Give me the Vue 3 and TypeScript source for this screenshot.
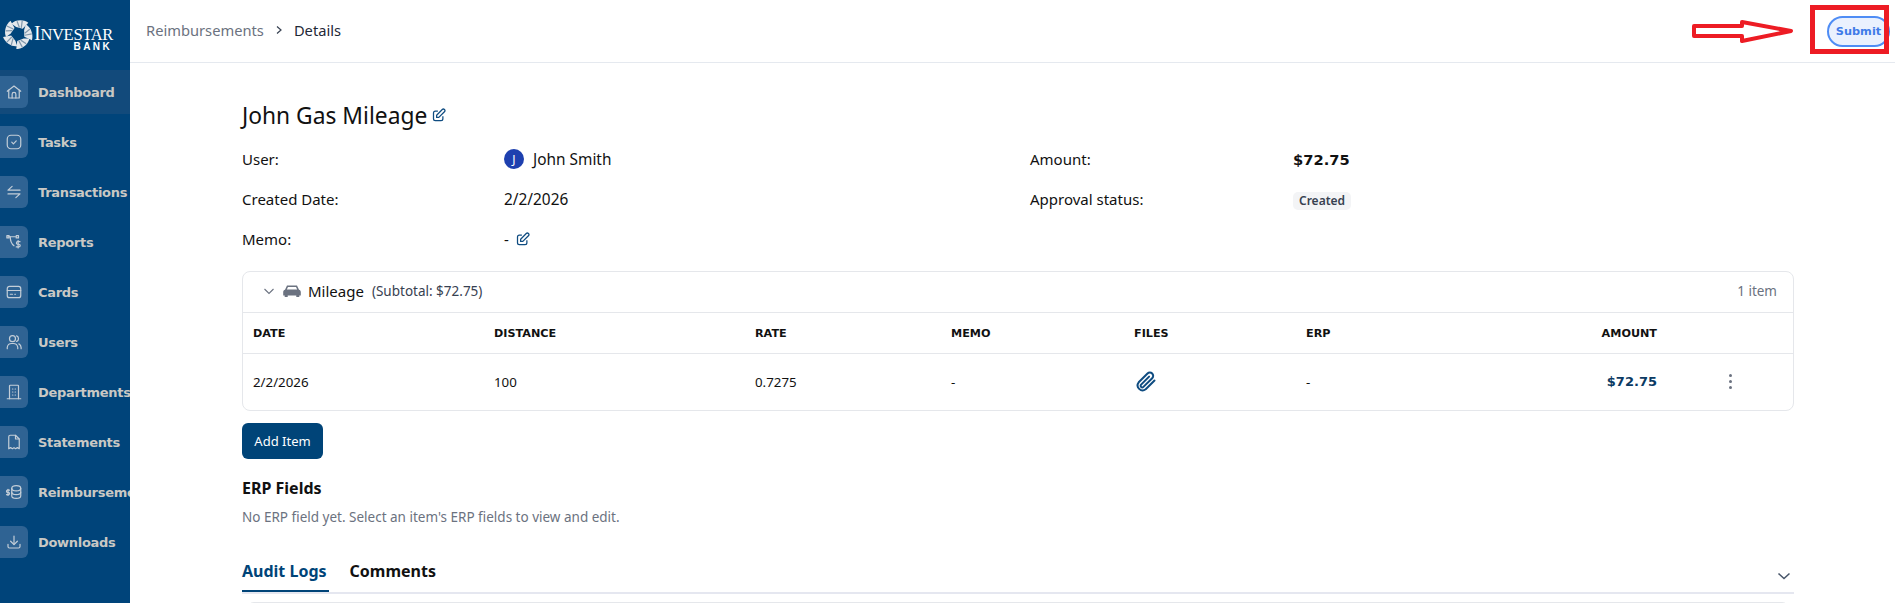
<script setup lang="ts">
interface NavItem {
  label: string;
  active?: boolean;
  paths: string[];
}

const navItems: NavItem[] = [
  { label: 'Dashboard', active: true, paths: ['M3 11l9-7 9 7', 'M5 9.5V20h14V9.5', 'M9.5 20v-5a2.5 2.5 0 0 1 5 0v5'] },
  { label: 'Tasks', paths: ['M8 3h8a5 5 0 0 1 5 5v8a5 5 0 0 1-5 5H8a5 5 0 0 1-5-5V8a5 5 0 0 1 5-5z', 'M9 12.2l2.2 2.2L15 10.5'] },
  { label: 'Transactions', paths: ['M20 9.5H4L9.5 4.500', 'M4 14.5h16L14.500 19.500'] },
  { label: 'Reports', paths: ['M4 5h10', 'M7 5c0 6 1 9 5 12', 'M2.500 3.500h3v3h-3z', 'M15 3.500h3v3h-3z', 'M20 11.500h-3a1.500 1.500 0 0 0 0 3.500h1.500a1.500 1.500 0 0 1 0 3.500H15', 'M17.500 10v10'] },
  { label: 'Cards', paths: ['M6 4.500h12a3 3 0 0 1 3 3v9a3 3 0 0 1-3 3H6a3 3 0 0 1-3-3v-9a3 3 0 0 1 3-3z', 'M3 10h18', 'M7 15h3', 'M13 15h1'] },
  { label: 'Users', paths: ['M10 3.500a4 4 0 1 1 0 8 4 4 0 0 1 0-8z', 'M3 21v-2a6 6 0 0 1 6-5h2a6 6 0 0 1 6 5v2', 'M15.500 3.800a4 4 0 0 1 0 7.400', 'M18.500 14.500a6 6 0 0 1 3 5V21'] },
  { label: 'Departments', paths: ['M6 21V4a1 1 0 0 1 1-1h10a1 1 0 0 1 1 1v17', 'M3 21h18', 'M10 8h.5', 'M13.500 8h.5', 'M10 12h.5', 'M13.500 12h.5', 'M10 16h.5', 'M13.500 16h.5'] },
  { label: 'Statements', paths: ['M5 21V5a2 2 0 0 1 2-2h7l5 5v13l-2.500-1.500L14 21l-2-1.500L10 21l-2.500-1.500z', 'M14 3v5h5'] },
  { label: 'Reimbursements', paths: ['M9 7c0-2 2.500-3.500 6-3.500S21 5 21 7v10c0 2-2.500 3.500-6 3.500S9 19 9 17z', 'M9 7c0 2 2.500 3.500 6 3.500S21 9 21 7', 'M9 12c0 2 2.500 3.500 6 3.500s6-1.500 6-3.500', 'M6 9.500H3.500a1 1 0 0 0 0 3h1a1 1 0 0 1 0 3H2', 'M4 8.500v8'] },
  { label: 'Downloads', paths: ['M12 4v11', 'M7.500 11l4.500 4.500 4.500-4.500', 'M4 15v3a2 2 0 0 0 2 2h12a2 2 0 0 0 2-2v-3'] },
];

const columns = ['DATE', 'DISTANCE', 'RATE', 'MEMO', 'FILES', 'ERP'];
const editPaths = ['M11 5H7a3 3 0 0 0-3 3v9a3 3 0 0 0 3 3h9a3 3 0 0 0 3-3v-4', 'M9 15v-3.500L18 2.500a1.800 1.800 0 0 1 3.500 3.500L12.500 15z'];
const starArcs = [0, 72, 144, 216, 288];
</script>

<template>
  <div class="page">
    <aside class="sidebar">
      <div class="logo">
        <svg class="logo__star" viewBox="0 0 32 32" width="30" height="30" aria-hidden="true">
          <g v-for="angle in starArcs" :key="angle" :transform="`rotate(${angle} 16 16)`">
            <path d="M9 5 C13 1 21 0 27 4 L21 10.500 L14 8.500 Z" fill="#e4e8ec" />
            <path d="M15 2.500 L17.500 9 M20.500 2 L19.500 9.500" stroke="#8298ac" stroke-width="1.300" />
          </g>
        </svg>
        <div class="logo__words">
          <span class="logo__name"><span class="logo__cap">I</span>NVESTAR</span>
          <span class="logo__bank">BANK</span>
        </div>
      </div>

      <nav class="nav">
        <a v-for="item in navItems" :key="item.label" class="nav__item" :class="{ 'nav__item--active': item.active }">
          <span class="nav__icon">
            <svg viewBox="0 0 24 24" width="18" height="18" fill="none" stroke="currentColor" stroke-width="1.600" stroke-linecap="round" stroke-linejoin="round" aria-hidden="true">
              <path v-for="d in item.paths" :key="d" :d="d" />
            </svg>
          </span>
          <span class="nav__label">{{ item.label }}</span>
        </a>
      </nav>
    </aside>

    <div class="main">
      <header class="topbar">
        <div class="crumbs">
          <span class="crumbs__link">Reimbursements</span>
          <svg viewBox="0 0 10 10" width="10" height="10" fill="none" stroke="#374151" stroke-width="1.200" aria-hidden="true"><path d="M3 1.500L7 5 3 8.500" /></svg>
          <span class="crumbs__current">Details</span>
        </div>
        <button type="button" class="submit">Submit</button>
      </header>

      <section class="content">
        <h1 class="title">
          John Gas Mileage
          <svg class="edit" viewBox="0 0 24 24" width="15" height="15" fill="none" stroke="currentColor" stroke-width="2" stroke-linejoin="round" aria-hidden="true">
            <path v-for="d in editPaths" :key="d" :d="d" />
          </svg>
        </h1>

        <div class="facts">
          <span>User:</span>
          <span class="user"><span class="user__avatar">J</span>John Smith</span>
          <span>Amount:</span>
          <strong class="facts__amount">$72.75</strong>

          <span>Created Date:</span>
          <span class="facts__value">2/2/2026</span>
          <span>Approval status:</span>
          <span><span class="badge">Created</span></span>

          <span>Memo:</span>
          <span class="memo">
            -
            <svg class="edit" viewBox="0 0 24 24" width="15" height="15" fill="none" stroke="currentColor" stroke-width="2" stroke-linejoin="round" aria-hidden="true">
              <path v-for="d in editPaths" :key="d" :d="d" />
            </svg>
          </span>
        </div>

        <div class="card">
          <div class="card__head">
            <div class="card__title">
              <svg viewBox="0 0 12 12" width="12" height="12" fill="none" stroke="#6b7280" stroke-width="1.100" aria-hidden="true"><path d="M1.500 4L6 8.500 10.500 4" /></svg>
              <svg class="car" viewBox="0 0 18 14" width="18" height="14" aria-hidden="true">
                <path fill="#6b7280" d="M4 1.500h10l2 4.200c1 .4 1.800 1 1.800 2.300v3.500h-1.500v1.500h-3v-1.500H4.700v1.500h-3v-1.500H.2V8c0-1.300.800-1.900 1.800-2.300zM5 3L3.800 5.500h10.400L13 3z" />
              </svg>
              <span class="card__name">Mileage</span>
              <span class="card__subtotal">(Subtotal: $72.75)</span>
            </div>
            <span class="card__count">1 item</span>
          </div>

          <div class="row row--head">
            <span v-for="col in columns" :key="col">{{ col }}</span>
            <span class="row__amount">AMOUNT</span>
            <span></span>
          </div>

          <div class="row row--body">
            <span>2/2/2026</span>
            <span>100</span>
            <span>0.7275</span>
            <span>-</span>
            <span class="clip">
              <svg viewBox="0 0 24 24" width="24" height="24" fill="none" stroke="#0f4c81" stroke-width="2" stroke-linecap="round" stroke-linejoin="round" aria-hidden="true">
                <path d="M20.500 10.500l-8.800 8.800a5 5 0 0 1-7-7l8.800-8.800a3.300 3.300 0 0 1 4.700 4.700l-8.800 8.700a1.600 1.600 0 0 1-2.300-2.300l8-8" />
              </svg>
            </span>
            <span>-</span>
            <span class="row__amount row__amount--value">$72.75</span>
            <span class="dots"><i></i><i></i><i></i></span>
          </div>
        </div>

        <button type="button" class="add">Add Item</button>

        <h2 class="erp__title">ERP Fields</h2>
        <p class="erp__text">No ERP field yet. Select an item's ERP fields to view and edit.</p>

        <div class="tabs">
          <span class="tabs__tab tabs__tab--active">Audit Logs</span>
          <span class="tabs__tab">Comments</span>
          <svg class="tabs__toggle" viewBox="0 0 14 14" width="14" height="14" fill="none" stroke="#475569" stroke-width="1.500" aria-hidden="true"><path d="M1.500 4.500L7 9.500 12.500 4.500" /></svg>
        </div>
        <div class="next-card"></div>
      </section>
    </div>

    <!-- red annotation drawn over the screenshot -->
    <svg class="annotation" viewBox="0 0 1895 70" width="1895" height="70" fill="none" stroke="#ed1c24" aria-hidden="true">
      <polygon points="1694,26 1742,26 1742,22 1791,31 1742,41 1742,36 1694,36" stroke-width="4" stroke-linejoin="round" />
      <rect x="1812.500" y="7.500" width="74" height="44" stroke-width="5" />
    </svg>
  </div>
</template>

<style scoped>
.page {
  position: relative;
  display: flex;
  width: 1895px;
  height: 603px;
  overflow: hidden;
  background: #fff;
  color: #111;
  font-family: "Noto Sans", "DejaVu Sans", sans-serif;
  font-size: 14px;
}

.sidebar {
  flex: 0 0 130px;
  width: 130px;
  overflow: hidden;
  background: #00447a;
}

.logo {
  display: flex;
  align-items: flex-start;
  gap: 1px;
  height: 70px;
  padding: 18px 0 0 3px;
  box-sizing: border-box;
}

.logo__star {
  flex: none;
  margin-top: 1px;
}

.logo__words {
  display: flex;
  flex-direction: column;
  color: #fff;
}

.logo__name {
  font-family: "Liberation Serif", serif;
  font-size: 16.500px;
  line-height: 17px;
  letter-spacing: -0.3px;
  margin-top: 7px;
  white-space: nowrap;
}

.logo__cap {
  font-size: 20px;
}

.logo__bank {
  align-self: flex-end;
  margin: -1px 1px 0 0;
  font-family: "Liberation Sans", sans-serif;
  font-size: 10px;
  font-weight: 700;
  line-height: 9px;
  letter-spacing: 2.400px;
}

.nav {
  display: flex;
  flex-direction: column;
  gap: 6px;
}

.nav__item {
  display: flex;
  align-items: center;
  gap: 10px;
  height: 44px;
  white-space: nowrap;
  color: #c9c8c4;
  font-family: "DejaVu Sans", sans-serif;
  font-size: 13px;
  font-weight: 700;
  letter-spacing: -0.3px;
}

.nav__item--active {
  background: #124a7b;
}

.nav__icon {
  display: flex;
  flex: none;
  align-items: center;
  justify-content: center;
  width: 28px;
  height: 32px;
  border-radius: 0 6px 6px 0;
  background: #2f6393;
  color: #c4ced8;
}

.main {
  flex: 1;
  min-width: 0;
}

.topbar {
  display: flex;
  align-items: center;
  justify-content: space-between;
  height: 62px;
  padding: 0 5px 0 16px;
  border-bottom: 1px solid #e5e9ef;
}

.crumbs {
  display: flex;
  align-items: center;
  gap: 10px;
  margin-top: -2px;
  font-size: 14.700px;
}

.crumbs__link {
  color: #6b7280;
}

.crumbs__current {
  color: #1f2937;
}

.submit {
  width: 63px;
  height: 31px;
  padding: 0;
  border: 2px solid #4f8df5;
  border-radius: 16px;
  background: #eaf1fe;
  color: #3f7be8;
  font-family: "DejaVu Sans", sans-serif;
  font-size: 11.300px;
  font-weight: 700;
}

.content {
  width: 1552px;
  margin-left: 112px;
}

.title {
  display: flex;
  align-items: center;
  gap: 4px;
  margin: 0;
  padding-top: 35px;
  height: 69px;
  box-sizing: border-box;
  font-size: 22.800px;
  font-weight: 400;
  line-height: 33px;
}

.edit {
  color: #0f4c81;
}

.facts {
  display: grid;
  grid-template-columns: 262px 526px 263px 1fr;
  grid-auto-rows: 40px;
  align-items: center;
  margin-top: 7px;
  font-size: 15px;
}

.facts__amount {
  font-family: "DejaVu Sans", sans-serif;
  font-size: 14.700px;
}

.facts__value {
  font-size: 15.400px;
}

.user {
  display: flex;
  align-items: center;
  gap: 9px;
  font-size: 15.400px;
}

.user__avatar {
  display: flex;
  align-items: center;
  justify-content: center;
  width: 20px;
  height: 20px;
  border-radius: 50%;
  background: #1e40af;
  color: #fff;
  font-size: 12px;
}

.memo {
  display: flex;
  align-items: center;
  gap: 6px;
}

.badge {
  display: inline-block;
  padding: 1px 6px;
  border-radius: 5px;
  background: #f3f4f6;
  color: #374151;
  font-size: 12px;
  font-weight: 600;
  line-height: 16px;
}

.card {
  height: 140px;
  box-sizing: border-box;
  margin-top: 11.500px;
  border: 1px solid #e5e7eb;
  border-radius: 8px;
}

.card__head {
  display: flex;
  align-items: center;
  justify-content: space-between;
  height: 40px;
  padding: 0 16px 0 20px;
  border-bottom: 1px solid #e5e7eb;
}

.card__title {
  display: flex;
  align-items: center;
  gap: 8px;
  margin-top: -1px;
}

.card__name {
  margin-left: -1px;
  font-size: 15px;
}

.card__subtotal {
  font-size: 13.500px;
  color: #374151;
}

.card__count {
  margin-top: -1px;
  font-size: 13.500px;
  color: #6b7280;
}

.row {
  display: grid;
  grid-template-columns: 241px 261px 196px 183px 172px 186px 165px 1fr;
  align-items: center;
  padding-left: 10px;
  font-size: 13.300px;
}

.row--head {
  height: 39px;
  padding-top: 1px;
  border-bottom: 1px solid #e5e7eb;
  font-family: "DejaVu Sans", sans-serif;
  font-size: 11.200px;
  font-weight: 700;
}

.row--body {
  height: 56px;
}

.row__amount {
  text-align: right;
}

.row__amount--value {
  color: #0b3a63;
  font-family: "DejaVu Sans", sans-serif;
  font-size: 13px;
  font-weight: 700;
}

.clip {
  display: flex;
}

.dots {
  display: flex;
  flex-direction: column;
  gap: 3px;
  align-items: center;
  width: 4px;
  margin-left: 71px;
}

.dots i {
  width: 3px;
  height: 3px;
  border-radius: 50%;
  background: #6b7280;
}

.add {
  display: block;
  width: 81px;
  height: 36px;
  margin-top: 12px;
  padding: 0;
  border: 0;
  border-radius: 6px;
  background: #004478;
  color: #fff;
  font-family: "Noto Sans", sans-serif;
  font-size: 13px;
}

.erp__title {
  margin: 19px 0 0;
  font-size: 16px;
  font-weight: 700;
  line-height: 20px;
}

.erp__text {
  margin: 9px 0 0;
  color: #6b7280;
  font-size: 13.500px;
  line-height: 20px;
}

.tabs {
  position: relative;
  display: flex;
  gap: 21px;
  height: 48px;
  margin-top: 19px;
  padding-top: 13px;
  box-sizing: border-box;
  border-bottom: 2px solid #e5e7f0;
}

.tabs__tab {
  height: 33px;
  box-sizing: border-box;
  font-size: 16px;
  font-weight: 700;
  line-height: 24px;
}

.tabs__tab--active {
  color: #004478;
  border-bottom: 2px solid #004478;
  padding-right: 2px;
}

.tabs__toggle {
  position: absolute;
  right: 3px;
  top: 23px;
}

.next-card {
  height: 20px;
  margin: 8px 4px 0;
  border: 1px solid #e5e7eb;
  border-radius: 8px;
}

.annotation {
  position: absolute;
  top: 0;
  left: 0;
  pointer-events: none;
}
</style>

<style>
html,
body {
  margin: 0;
  overflow: hidden;
}
</style>
